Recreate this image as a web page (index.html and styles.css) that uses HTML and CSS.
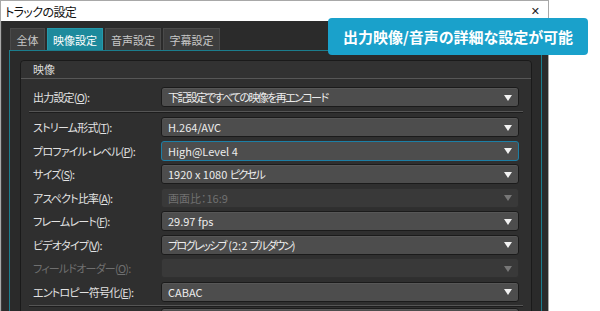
FILE: index.html
```html
<!DOCTYPE html>
<html lang="ja">
<head>
    <meta charset="UTF-8">
    <title>トラックの設定</title>
    <link rel="stylesheet" href="styles.css">
</head>
<body>

<div class="dialog">
    <div class="titlebar">
        <span class="title">トラックの設定</span>
        <span class="close">✕</span>
    </div>

    <div class="dialog-body">
        <div class="tabs">
            <div class="tab tab-small">全体</div>
            <div class="tab active">映像設定</div>
            <div class="tab">音声設定</div>
            <div class="tab tab-wide">字幕設定</div>
        </div>

        <div class="panel">
            <div class="group">
                <div class="group-head">映像</div>

                <div class="group-body">
                    <div class="row">
                        <div class="label">出力設定(<u>O</u>):</div>
                        <div class="select"><span class="ja">下記設定ですべての映像を再エンコード</span><i class="arrow"></i></div>
                    </div>

                    <div class="sep"></div>

                    <div class="row-list">
                        <div class="row">
                            <div class="label">ストリーム形式(<u>T</u>):</div>
                            <div class="select"><span>H.264/AVC</span><i class="arrow"></i></div>
                        </div>
                        <div class="row">
                            <div class="label">プロファイル・レベル(<u>P</u>):</div>
                            <div class="select focused"><span>High@Level 4</span><i class="arrow"></i></div>
                        </div>
                        <div class="row">
                            <div class="label">サイズ(<u>S</u>):</div>
                            <div class="select"><span>1920 x 1080 <span class="ja">ピクセル</span></span><i class="arrow"></i></div>
                        </div>
                        <div class="row">
                            <div class="label">アスペクト比率(<u>A</u>):</div>
                            <div class="select disabled"><span>画面比：16:9</span><i class="arrow"></i></div>
                        </div>
                        <div class="row">
                            <div class="label">フレームレート(<u>F</u>):</div>
                            <div class="select"><span>29.97 fps</span><i class="arrow"></i></div>
                        </div>
                        <div class="row">
                            <div class="label">ビデオタイプ(<u>V</u>):</div>
                            <div class="select"><span><span class="ja">プログレッシブ</span> (2:2 <span class="ja">プルダウン</span>)</span><i class="arrow"></i></div>
                        </div>
                        <div class="row">
                            <div class="label muted">フィールドオーダー(<u>O</u>):</div>
                            <div class="select disabled"><span></span><i class="arrow"></i></div>
                        </div>
                        <div class="row">
                            <div class="label">エントロピー符号化(<u>E</u>):</div>
                            <div class="select"><span>CABAC</span><i class="arrow"></i></div>
                        </div>
                    </div>

                    <div class="sep sep-bottom"></div>

                    <div class="row">
                        <div class="label"></div>
                        <div class="select"><span></span><i class="arrow"></i></div>
                    </div>
                </div>
            </div>
        </div>
    </div>
</div>

<!-- Callout over the dialog -->
<div class="callout">出力映像/音声の詳細な設定が可能</div>

</body>
</html>
```

FILE: styles.css
```css
/* Page */
body {
    margin: 0;
    width: 600px;
    height: 311px;
    overflow: hidden;
    background: #ffffff;
    font-family: "Noto Sans CJK JP", "Noto Sans", sans-serif;
    font-feature-settings: "palt";
    position: relative;
}

/* Dialog window */
.dialog {
    width: 547px;
    height: 310px;
    overflow: hidden;
    border: 1px solid #a8a8a8;
    border-bottom: none;
    background: #2b2b2b;
}

.titlebar {
    height: 20px;
    background: #ffffff;
    display: flex;
    align-items: center;
    justify-content: space-between;
    padding: 0 8px 0 4px;
}

.title {
    font-size: 12px;
    color: #111111;
    letter-spacing: -0.6px;
}

.close {
    font-size: 11px;
    color: #222222;
    font-family: "DejaVu Sans", sans-serif;
}

.dialog-body {
    padding: 7px 7px 0 7px;
    border-left: 1px solid #3c3c3c;
}

/* Tabs */
.tabs {
    display: flex;
    gap: 2px;
    margin-left: 1px;
    height: 22px;
}

.tab {
    width: 56px;
    box-sizing: border-box;
    background: #3d3d3d;
    border: 1px solid #4a4a4a;
    border-bottom: none;
    color: #c8c8c8;
    font-size: 11px;
    display: flex;
    align-items: center;
    justify-content: center;
}

.tab-small {
    width: 35px;
}

.tab-wide {
    width: 57px;
}

.tab.active {
    background: #1d8a9c;
    border-color: #2499ab;
    color: #ffffff;
}

/* Tab panel */
.panel {
    height: 300px;
    border: 1px solid #1b7d8d;
    border-bottom: none;
    background: #2a2a2a;
    padding: 9px 0 0 10px;
    box-sizing: border-box;
    width: 533px;
}

/* Group box */
.group {
    width: 512px;
    box-sizing: border-box;
    border: 1px solid #1a1a1a;
    border-radius: 4px;
    background: #2f2f2f;
}

.group-head {
    height: 17px;
    line-height: 17px;
    padding-left: 12px;
    font-size: 11px;
    color: #dcdcdc;
    border-bottom: 1px solid #575757;
    background: #323232;
    border-radius: 4px 4px 0 0;
}

.group-body {
    padding: 8px 0 0 0;
}

.row-list {
    display: flex;
    flex-direction: column;
    gap: 3.57px;
}

.row {
    display: flex;
    align-items: center;
    padding: 0 12px;
    height: 20px;
}

.label {
    width: 128px;
    flex-shrink: 0;
    font-size: 11px;
    color: #e2e2e2;
    letter-spacing: -0.8px;
}

.label u {
    text-underline-offset: 1px;
}

.label.muted {
    color: #6f6f6f;
}

.sep {
    margin: 4px 8px 4px 8px;
    height: 1px;
    background: #555555;
    border-bottom: 1px solid #1d1d1d;
}

.sep-bottom {
    margin: 3px 8px 1px 8px;
}

/* Drop-down boxes */
.select {
    flex: 1;
    height: 20px;
    box-sizing: border-box;
    border: 1px solid #1b1b1b;
    border-radius: 3px;
    background: #4d4d4d;
    box-shadow: inset 0 1px 0 #575757;
    display: flex;
    align-items: center;
    justify-content: space-between;
    padding: 0 6px 0 6px;
    font-size: 11px;
    color: #ececec;
}

.select .ja {
    letter-spacing: -1.6px;
}

.select.focused {
    border-color: #1c7fa6;
    box-shadow: none;
}

.select.disabled {
    background: #393939;
    border-color: #303030;
    box-shadow: none;
    color: #707070;
}

.arrow {
    width: 0;
    height: 0;
    border-left: 4px solid transparent;
    border-right: 4px solid transparent;
    border-top: 6px solid #f2f2f2;
    margin-top: 1px;
}

.select.disabled .arrow {
    border-top-color: #777777;
}

/* Callout */
.callout {
    position: absolute;
    left: 328px;
    top: 18px;
    width: 260px;
    height: 37px;
    border-radius: 4px;
    background: #1aa1cb;
    color: #ffffff;
    font-size: 15px;
    font-weight: bold;
    display: flex;
    align-items: center;
    justify-content: center;
}
```
